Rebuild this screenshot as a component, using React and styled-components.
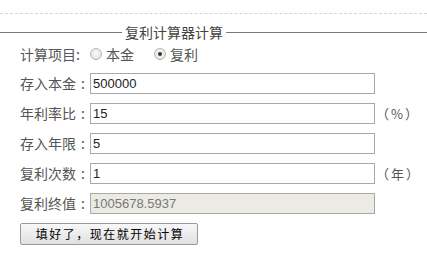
import React from 'react';
import styled, { createGlobalStyle } from 'styled-components';

const Global = createGlobalStyle`
  html, body { margin: 0; padding: 0; background: #fff; }
  body { font-family: "Noto Sans CJK SC", "Liberation Sans", sans-serif; }
`;

const Page = styled.div`
  width: 427px;
  height: 261px;
  overflow: hidden;
  padding-top: 13px;
  box-sizing: border-box;
`;

const Dashed = styled.div`
  border-top: 1px dashed #d4d4d4;
`;

const Legend = styled.div`
  display: flex;
  align-items: center;
  margin-top: 10px;
  height: 16px;
`;

const Line = styled.div`
  height: 1px;
  background: #7a7a7a;
  width: ${({ w }) => (w ? `${w}px` : 'auto')};
  flex: ${({ w }) => (w ? 'none' : '1')};
`;

const LegendText = styled.span`
  font-size: 14px;
  color: #444;
  padding: 0 3px;
  line-height: 16px;
`;

const Form = styled.div`
  padding-left: 20px;
`;

const Row = styled.div`
  display: flex;
  align-items: center;
  height: ${({ h }) => h || 30}px;
`;

const Label = styled.span`
  display: inline-flex;
  width: 70px;
  font-size: 14px;
  color: #555;
  white-space: nowrap;
`;

const Colon = styled.span`
  width: 14px;
  text-align: center;
`;

const Radio = styled.span`
  display: inline-block;
  width: 10px;
  height: 10px;
  border-radius: 50%;
  border: 1px solid #b8b8b8;
  background: radial-gradient(circle at 50% 40%, #fafafa 0%, #dcdcdc 100%);
  position: relative;
  margin: 0 4px 0 0;
  &::after {
    content: '';
    display: ${({ checked }) => (checked ? 'block' : 'none')};
    position: absolute;
    left: 3px;
    top: 3px;
    width: 4px;
    height: 4px;
    border-radius: 50%;
    background: #333;
  }
`;

const Option = styled.label`
  display: inline-flex;
  align-items: center;
  font-size: 14px;
  color: #555;
  margin-right: ${({ mr }) => mr || 0}px;
`;

const Input = styled.input`
  width: 285px;
  height: 21px;
  box-sizing: border-box;
  border: 1px solid #a9a9a9;
  padding: 0 2px;
  font-family: "Liberation Sans", Arial, sans-serif;
  font-size: 13px;
  color: ${({ readOnly }) => (readOnly ? '#777' : '#222')};
  background: ${({ readOnly }) => (readOnly ? '#ebebe4' : '#fff')};
  outline: none;
`;

const Unit = styled.span`
  margin-left: 1px;
  font-size: 13px;
  color: #555;
  letter-spacing: 2px;
`;

const Button = styled.button`
  margin-top: 5px;
  width: 178px;
  height: 22px;
  border: 1px solid #9a9a9a;
  border-radius: 2px;
  background: linear-gradient(#f8f8f8, #e0e0e0);
  font-family: "Noto Sans CJK SC", sans-serif;
  font-size: 12px;
  font-weight: normal;
  color: #000;
  letter-spacing: 1.5px;
  padding: 0 0 0 2px;
  line-height: 20px;
  white-space: nowrap;
`;

const fields = [
  { label: '存入本金', value: '500000' },
  { label: '年利率比', value: '15', unit: '（%）' },
  { label: '存入年限', value: '5' },
  { label: '复利次数', value: '1', unit: '（年）' },
  { label: '复利终值', value: '1005678.5937', readOnly: true },
];

export default function App() {
  return (
    <Page>
      <Global />
      <Dashed />
      <Legend>
        <Line w={122} />
        <LegendText>复利计算器计算</LegendText>
        <Line />
      </Legend>
      <Form>
        <Row h={28}>
          <Label>计算项目:</Label>
          <Option mr={20}><Radio />本金</Option>
          <Option><Radio checked />复利</Option>
        </Row>
        {fields.map((f) => (
          <Row key={f.label}>
            <Label>{f.label}<Colon>:</Colon></Label>
            <Input readOnly={f.readOnly} defaultValue={f.value} />
            {f.unit && <Unit>{f.unit}</Unit>}
          </Row>
        ))}
        <Button>填好了，现在就开始计算</Button>
      </Form>
    </Page>
  );
}
